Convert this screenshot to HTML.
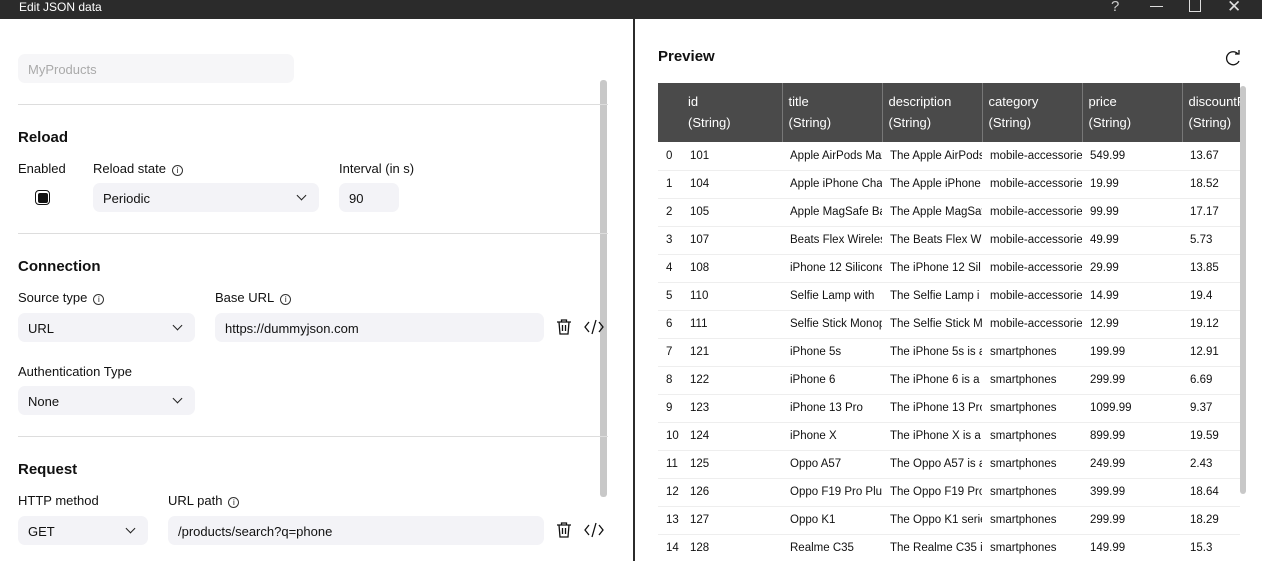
<!DOCTYPE html>
<html><head><style>
*{margin:0;padding:0;box-sizing:border-box}
body{width:1262px;height:561px;overflow:hidden;background:#fff;font-family:"Liberation Sans",sans-serif;color:#111;position:relative}
.a{position:absolute}
.top{left:0;top:0;width:1262px;height:19px;background:#2b2b2b;color:#fff;font-size:12px}
.lbl{font-size:13px;color:#111}
.h{font-size:15px;font-weight:bold}
.inp{background:#f3f3f7;border-radius:7px;height:29px;font-size:13px;padding:8px 10px}
.hr{height:1px;background:#ddd;left:18px;width:590px}
.chev{position:absolute;right:14px;top:9px;width:7px;height:7px;border-right:1.3px solid #222;border-bottom:1.3px solid #222;transform:rotate(45deg)}
.info{display:inline-block;width:11px;height:11px;border:1px solid #333;border-radius:50%;font-size:8px;text-align:center;line-height:10px;margin-left:6px;vertical-align:0}
table{border-collapse:collapse;font-size:11.5px;table-layout:fixed}
th{background:#4a4a4a;color:#fff;font-weight:normal;text-align:left;font-size:13px;line-height:21px;padding:8px 6px 7px;border-left:1px solid #777;height:59px;vertical-align:top;white-space:nowrap;overflow:hidden}
td{height:28px;border-bottom:1px solid #eee;padding:0 8px;white-space:nowrap;overflow:hidden}
td:first-child{padding:0 0 0 8px}
</style></head><body>
<div class="a top"><span class="a" style="left:19px;top:0">Edit JSON data</span>
<span class="a" style="left:1111px;top:-2px;font-size:15px;color:#ccc">?</span>
<div class="a" style="left:1150px;top:6px;width:13px;height:1px;background:#ddd"></div>
<div class="a" style="left:1189px;top:0;width:12px;height:12px;border:1px solid #ddd;border-top:none"></div>
<span class="a" style="left:1227px;top:-3px;font-size:17px;color:#ddd">✕</span></div>

<div class="a" style="left:633px;top:19px;width:2px;height:542px;background:#2b2b2b"></div>
<div class="a" style="left:600px;top:80px;width:7px;height:417px;background:#c8c8c8;border-radius:3px"></div>

<div class="a inp" style="left:18px;top:54px;width:276px;color:#aaa;background:#f6f6f8">MyProducts</div>
<div class="a hr" style="top:104px"></div>
<div class="a h" style="left:18px;top:129px">Reload</div>
<div class="a lbl" style="left:18px;top:161px">Enabled</div>
<div class="a lbl" style="left:93px;top:161px">Reload state<span class="info">i</span></div>
<div class="a lbl" style="left:339px;top:161px">Interval (in s)</div>
<div class="a" style="left:35px;top:190px;width:15px;height:15px;border:1.5px solid #111;border-radius:4px;padding:1.5px"><div style="width:100%;height:100%;background:#111;border-radius:2px"></div></div>
<div class="a inp" style="left:93px;top:183px;width:226px">Periodic<span class="chev"></span></div>
<div class="a inp" style="left:339px;top:183px;width:60px">90</div>
<div class="a hr" style="top:233px"></div>
<div class="a h" style="left:18px;top:258px">Connection</div>
<div class="a lbl" style="left:18px;top:290px">Source type<span class="info">i</span></div>
<div class="a lbl" style="left:215px;top:290px">Base URL<span class="info">i</span></div>
<div class="a inp" style="left:18px;top:313px;width:177px">URL<span class="chev"></span></div>
<div class="a inp" style="left:215px;top:313px;width:329px">https://dummyjson.com</div>
<svg class="a" style="left:555px;top:318px" width="18" height="18" viewBox="0 0 18 18" fill="none" stroke="#111" stroke-width="1.3"><path d="M2 4h14M6.5 4V2h5v2M4 4l1 12h8l1-12M7.5 7v6M10.5 7v6"/></svg>
<svg class="a" style="left:584px;top:318px" width="20" height="18" viewBox="0 0 20 18" fill="none" stroke="#111" stroke-width="1.3"><path d="M5 4L1 9l4 5M15 4l4 5-4 5M12 2L8 16"/></svg>
<div class="a lbl" style="left:18px;top:364px">Authentication Type</div>
<div class="a inp" style="left:18px;top:386px;width:177px">None<span class="chev"></span></div>
<div class="a hr" style="top:436px"></div>
<div class="a h" style="left:18px;top:461px">Request</div>
<div class="a lbl" style="left:18px;top:493px">HTTP method</div>
<div class="a lbl" style="left:168px;top:493px">URL path<span class="info">i</span></div>
<div class="a inp" style="left:18px;top:516px;width:130px">GET<span class="chev"></span></div>
<div class="a inp" style="left:168px;top:516px;width:376px">/products/search?q=phone</div>
<svg class="a" style="left:555px;top:521px" width="18" height="18" viewBox="0 0 18 18" fill="none" stroke="#111" stroke-width="1.3"><path d="M2 4h14M6.5 4V2h5v2M4 4l1 12h8l1-12M7.5 7v6M10.5 7v6"/></svg>
<svg class="a" style="left:584px;top:521px" width="20" height="18" viewBox="0 0 20 18" fill="none" stroke="#111" stroke-width="1.3"><path d="M5 4L1 9l4 5M15 4l4 5-4 5M12 2L8 16"/></svg>

<div class="a h" style="left:658px;top:48px">Preview</div>
<svg class="a" style="left:1223px;top:49px" width="20" height="18" viewBox="0 0 20 18" fill="none" stroke="#111" stroke-width="1.3"><path d="M15 5A6.5 6.5 0 1 0 16 12"/><path d="M12 5h4V1"/></svg>

<div class="a" style="left:658px;top:83px;width:582px;height:478px;overflow:hidden">
<table style="width:600px">
<colgroup><col style="width:24px"><col style="width:100px"><col style="width:100px"><col style="width:100px"><col style="width:100px"><col style="width:100px"><col style="width:76px"></colgroup>
<tr><th style="border-left:none"></th><th style="border-left:none">id<br>(String)</th><th>title<br>(String)</th><th>description<br>(String)</th><th>category<br>(String)</th><th>price<br>(String)</th><th>discountP<br>(String)</th></tr>
<tr><td>0</td><td>101</td><td>Apple AirPods Max</td><td>The Apple AirPods</td><td>mobile-accessories</td><td>549.99</td><td>13.67</td></tr>
<tr><td>1</td><td>104</td><td>Apple iPhone Charger</td><td>The Apple iPhone</td><td>mobile-accessories</td><td>19.99</td><td>18.52</td></tr>
<tr><td>2</td><td>105</td><td>Apple MagSafe Battery</td><td>The Apple MagSafe</td><td>mobile-accessories</td><td>99.99</td><td>17.17</td></tr>
<tr><td>3</td><td>107</td><td>Beats Flex Wireless</td><td>The Beats Flex Wi</td><td>mobile-accessories</td><td>49.99</td><td>5.73</td></tr>
<tr><td>4</td><td>108</td><td>iPhone 12 Silicone</td><td>The iPhone 12 Sil</td><td>mobile-accessories</td><td>29.99</td><td>13.85</td></tr>
<tr><td>5</td><td>110</td><td>Selfie Lamp with</td><td>The Selfie Lamp i</td><td>mobile-accessories</td><td>14.99</td><td>19.4</td></tr>
<tr><td>6</td><td>111</td><td>Selfie Stick Monopod</td><td>The Selfie Stick M</td><td>mobile-accessories</td><td>12.99</td><td>19.12</td></tr>
<tr><td>7</td><td>121</td><td>iPhone 5s</td><td>The iPhone 5s is a</td><td>smartphones</td><td>199.99</td><td>12.91</td></tr>
<tr><td>8</td><td>122</td><td>iPhone 6</td><td>The iPhone 6 is a</td><td>smartphones</td><td>299.99</td><td>6.69</td></tr>
<tr><td>9</td><td>123</td><td>iPhone 13 Pro</td><td>The iPhone 13 Pro</td><td>smartphones</td><td>1099.99</td><td>9.37</td></tr>
<tr><td>10</td><td>124</td><td>iPhone X</td><td>The iPhone X is a</td><td>smartphones</td><td>899.99</td><td>19.59</td></tr>
<tr><td>11</td><td>125</td><td>Oppo A57</td><td>The Oppo A57 is a</td><td>smartphones</td><td>249.99</td><td>2.43</td></tr>
<tr><td>12</td><td>126</td><td>Oppo F19 Pro Plus</td><td>The Oppo F19 Pro</td><td>smartphones</td><td>399.99</td><td>18.64</td></tr>
<tr><td>13</td><td>127</td><td>Oppo K1</td><td>The Oppo K1 series</td><td>smartphones</td><td>299.99</td><td>18.29</td></tr>
<tr><td>14</td><td>128</td><td>Realme C35</td><td>The Realme C35 is</td><td>smartphones</td><td>149.99</td><td>15.3</td></tr>
</table></div>
<div class="a" style="left:1240px;top:86px;width:6px;height:408px;background:#c8c8c8;border-radius:3px"></div>
</body></html>
